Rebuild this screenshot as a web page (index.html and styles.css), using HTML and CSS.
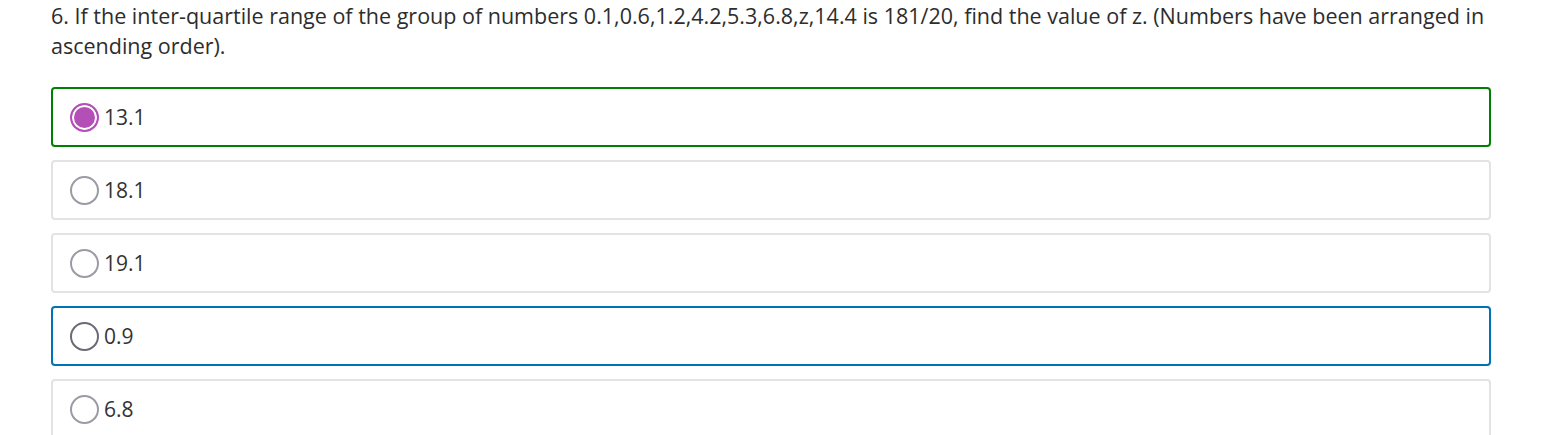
FILE: index.html
```html
<!DOCTYPE html>
<html>
<head>
<meta charset="utf-8">
<link rel="stylesheet" href="styles.css">
</head>
<body>
<div class="question">
  <p class="prompt">6. If the inter-quartile range of the group of numbers 0.1,0.6,1.2,4.2,5.3,6.8,z,14.4 is 181/20, find the value of z. (Numbers have been arranged in ascending order).</p>
  <div class="options">
    <label class="option correct"><span class="radio checked"></span><span class="label">13.1</span></label>
    <label class="option"><span class="radio"></span><span class="label">18.1</span></label>
    <label class="option"><span class="radio"></span><span class="label">19.1</span></label>
    <label class="option focused"><span class="radio dark"></span><span class="label">0.9</span></label>
    <label class="option"><span class="radio"></span><span class="label">6.8</span></label>
  </div>
</div>
</body>
</html>
```
FILE: styles.css
```css
html, body {
  margin: 0;
  padding: 0;
  background: #fff;
}
body {
  font-family: "Open Sans", sans-serif;
  color: #333;
}
.question {
  padding: 1px 54px 0 51px;
}
.prompt {
  margin: 0 0 26px 0;
  font-size: 21.5px;
  line-height: 30px;
  color: #2d2d2d;
}
.options {
  display: flex;
  flex-direction: column;
  gap: 13px;
}
.option {
  display: flex;
  align-items: center;
  height: 60px;
  box-sizing: border-box;
  border: 2px solid #e3e3e3;
  border-radius: 4px;
  padding-left: 17px;
  font-size: 21px;
  color: #333;
}
.option.correct {
  border-color: #008000;
}
.option.focused {
  border-color: #0073b6;
}
.radio {
  width: 29px;
  height: 29px;
  box-sizing: border-box;
  border-radius: 50%;
  border: 2px solid #9b9ba6;
  background: #fff;
  flex: none;
  margin-right: 5px;
}
.radio.dark {
  border-color: #6b6b76;
}
.radio.checked {
  border: 2px solid #b44fb8;
  background: #b44fb8;
  box-shadow: inset 0 0 0 2px #fff;
}
.label {
  line-height: 28px;
}
```
